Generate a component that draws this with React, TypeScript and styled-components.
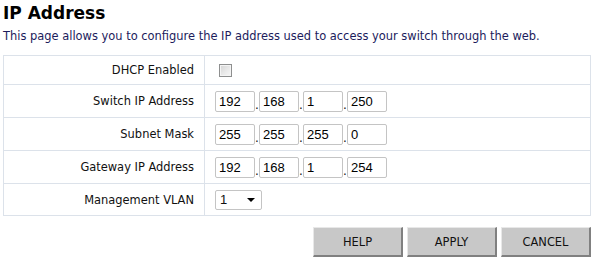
import React from 'react';
import styled, { createGlobalStyle } from 'styled-components';

const colors = {
  texto: '#111',
  desc: '#1c1c5c',
  borde: '#dce2ea',
  input: '#c4c4c4',
  boton: '#c8c8c8',
};

const GlobalStyle = createGlobalStyle`
  body {
    margin: 0;
    background: #fff;
    font-family: Tahoma, 'DejaVu Sans', sans-serif;
  }
`;

const Page = styled.div`
  width: 598px;
  padding: 0 8px 0 3px;
  box-sizing: border-box;
`;

const Title = styled.h1`
  margin: 0;
  padding-top: 2px;
  height: 28px;
  font-family: 'DejaVu Sans', sans-serif;
  font-size: 17px;
  font-weight: 700;
  color: #000;
  line-height: 22px;
  box-sizing: border-box;
`;

const Desc = styled.p`
  margin: 0;
  height: 27px;
  font-family: 'DejaVu Sans', sans-serif;
  font-size: 11.45px;
  line-height: 16px;
  color: ${colors.desc};
`;

const Grid = styled.table`
  width: 588px;
  border-collapse: collapse;
  font-family: 'DejaVu Sans', sans-serif;
  font-size: 11.45px;
  color: ${colors.texto};
`;

const Row = styled.tr<{ h: number }>`
  height: ${({ h }) => h}px;
`;

const Label = styled.td`
  width: 190px;
  border: 1px solid ${colors.borde};
  text-align: right;
  padding: 0 10px 0 0;
`;

const Field = styled.td`
  border: 1px solid ${colors.borde};
  padding: 0 0 0 10px;
`;

const IpGroup = styled.div`
  display: flex;
  align-items: flex-end;
`;

const Octet = styled.input`
  width: 40px;
  height: 21px;
  box-sizing: border-box;
  border: 1px solid ${colors.input};
  border-radius: 2px;
  padding: 0 3px;
  font-family: 'Liberation Sans', Arial, sans-serif;
  font-size: 13px;
  color: #000;
  outline: none;
`;

const Dot = styled.span`
  width: 4px;
  text-align: center;
  font-size: 12px;
  line-height: 14px;
`;

const Check = styled.input`
  appearance: none;
  margin: 0 0 0 4px;
  width: 13px;
  height: 13px;
  display: block;
  box-sizing: border-box;
  border: 1px solid #8e8f8f;
  background: linear-gradient(135deg, #d4d4d4 0%, #ebebeb 60%, #f6f6f6 100%);
  box-shadow: inset 0 0 0 1px #f4f4f4;
`;

const Select = styled.div`
  width: 47px;
  height: 20px;
  box-sizing: border-box;
  border: 1px solid ${colors.input};
  border-radius: 2px;
  display: flex;
  align-items: center;
  justify-content: space-between;
  padding: 0 6px 0 4px;
  font-family: 'Liberation Sans', Arial, sans-serif;
  font-size: 13px;
`;

const Caret = styled.span`
  width: 0;
  height: 0;
  border-left: 4px solid transparent;
  border-right: 4px solid transparent;
  border-top: 4px solid #000;
`;

const Buttons = styled.div`
  display: flex;
  justify-content: flex-end;
  gap: 4px;
  width: 588px;
  margin-top: 11px;
`;

const Button = styled.button`
  width: 90px;
  height: 30px;
  box-sizing: border-box;
  background: ${colors.boton};
  border: 1px solid;
  border-color: #e8e8e8 #808080 #808080 #e8e8e8;
  border-width: 1px 2px 2px 1px;
  font-family: 'DejaVu Sans', sans-serif;
  font-size: 11.45px;
  color: #111;
  padding: 0;
`;

const IpField: React.FC<{ value: string[] }> = ({ value }) => (
  <IpGroup>
    {value.map((v, i) => (
      <React.Fragment key={i}>
        {i > 0 && <Dot>.</Dot>}
        <Octet defaultValue={v} />
      </React.Fragment>
    ))}
  </IpGroup>
);

const App: React.FC = () => {
  return (
    <Page>
      <GlobalStyle />
      <Title>IP Address</Title>
      <Desc>This page allows you to configure the IP address used to access your switch through the web.</Desc>
      <Grid>
        <tbody>
          <Row h={29}>
            <Label>DHCP Enabled</Label>
            <Field><Check type="checkbox" /></Field>
          </Row>
          <Row h={33}>
            <Label>Switch IP Address</Label>
            <Field><IpField value={['192', '168', '1', '250']} /></Field>
          </Row>
          <Row h={33}>
            <Label>Subnet Mask</Label>
            <Field><IpField value={['255', '255', '255', '0']} /></Field>
          </Row>
          <Row h={33}>
            <Label>Gateway IP Address</Label>
            <Field><IpField value={['192', '168', '1', '254']} /></Field>
          </Row>
          <Row h={32}>
            <Label>Management VLAN</Label>
            <Field>
              <Select>1<Caret /></Select>
            </Field>
          </Row>
        </tbody>
      </Grid>
      <Buttons>
        <Button>HELP</Button>
        <Button>APPLY</Button>
        <Button>CANCEL</Button>
      </Buttons>
    </Page>
  );
};

export default App;
